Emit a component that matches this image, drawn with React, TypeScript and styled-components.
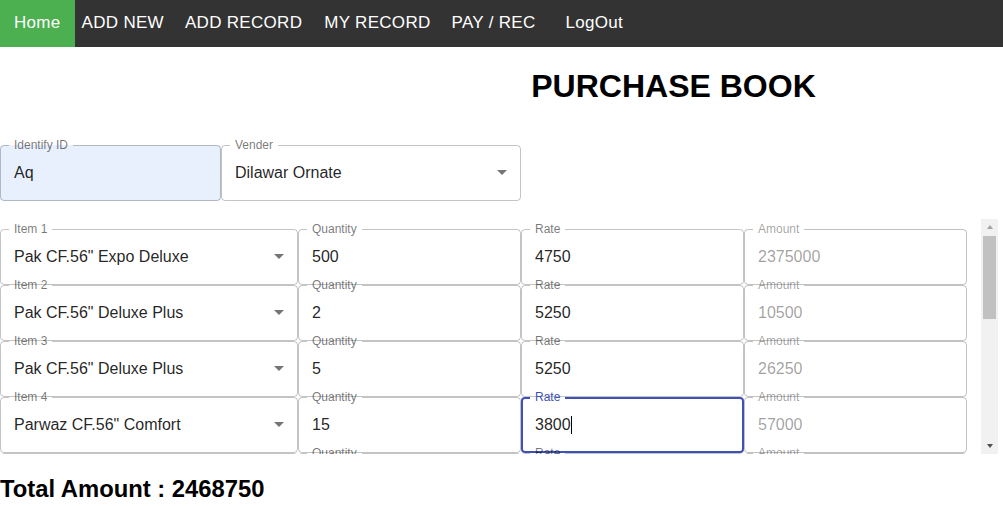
import React from "react";
import styled, { createGlobalStyle } from "styled-components";

const GlobalStyle = createGlobalStyle`
  html, body { margin: 0; padding: 0; background: #fff; }
  body { font-family: "Liberation Sans", Arial, Helvetica, sans-serif; }
  * { box-sizing: border-box; }
`;

const Nav = styled.nav`
  display: flex;
  height: 47px;
  background: #333;
`;

const NavLink = styled.a<{ $active?: boolean; $ml?: number }>`
  display: block;
  height: 47px;
  padding: 13px ${(p) => (p.$active ? 14 : 0)}px 0;
  margin-left: ${(p) => p.$ml ?? 0}px;
  background: ${(p) => (p.$active ? "#4CAF50" : "transparent")};
  color: #fff;
  font-size: 17px;
  line-height: 20px;
  letter-spacing: 0.3px;
  text-decoration: none;
  white-space: nowrap;
`;

const Header = styled.header`
  padding: 20px 0 0 344px;
`;

const Title = styled.h1`
  margin: 0;
  font-size: 32px;
  line-height: 38px;
  font-weight: 700;
  text-align: center;
  color: #000;
`;

const TopRow = styled.div`
  display: flex;
  margin-top: 40px;
`;

const Field = styled.div<{ $w: number; $bg?: string }>`
  position: relative;
  flex: 0 0 ${(p) => p.$w}px;
  width: ${(p) => p.$w}px;
  height: 56px;
  border-radius: 4px;
  background: ${(p) => p.$bg ?? "transparent"};
`;

const Outline = styled.fieldset<{ $focused?: boolean; $disabled?: boolean }>`
  position: absolute;
  top: -5px;
  left: 0;
  right: 0;
  bottom: 0;
  margin: 0;
  min-width: 0;
  padding: 0 ${(p) => (p.$focused ? 7 : 8)}px;
  border: ${(p) => (p.$focused ? 2 : 1)}px solid
    ${(p) => (p.$focused ? "#3f51b5" : p.$disabled ? "rgba(0,0,0,0.24)" : "rgba(0,0,0,0.23)")};
  border-radius: 4px;
  pointer-events: none;
  text-align: left;
`;

const Legend = styled.legend<{ $open: boolean }>`
  display: block;
  width: auto;
  height: 11px;
  padding: 0;
  font-size: 12px;
  line-height: 11px;
  visibility: hidden;
  white-space: nowrap;
  max-width: ${(p) => (p.$open ? "1000px" : "0.01px")};
  & > span {
    display: inline-block;
    padding: 0 5px;
  }
`;

const Label = styled.label<{ $shrink: boolean; $color: string }>`
  position: absolute;
  left: 0;
  top: 0;
  font-size: 16px;
  line-height: 1;
  color: ${(p) => p.$color};
  transform-origin: top left;
  transform: ${(p) => (p.$shrink ? "translate(14px, -6px) scale(0.75)" : "translate(14px, 20px) scale(1)")};
  white-space: nowrap;
  pointer-events: none;
`;

const Value = styled.div<{ $color: string; $select?: boolean }>`
  height: 56px;
  padding: 17.5px ${(p) => (p.$select ? 32 : 14)}px 19.5px 14px;
  font-size: 16px;
  line-height: 19px;
  color: ${(p) => p.$color};
  white-space: nowrap;
  overflow: hidden;
  text-overflow: ellipsis;
`;

const Caret = styled.span`
  display: inline-block;
  width: 1px;
  height: 18px;
  margin-left: 0.5px;
  vertical-align: -4px;
  background: #000;
`;

const Arrow = styled.svg`
  position: absolute;
  right: 7px;
  top: calc(50% - 13px);
  width: 24px;
  height: 24px;
  fill: rgba(0, 0, 0, 0.54);
  pointer-events: none;
`;

const ScrollFrame = styled.div`
  display: flex;
  margin-top: 18px;
  width: 998px;
  height: 235px;
`;

const ScrollArea = styled.div`
  flex: 1 1 auto;
  min-width: 0;
  padding-top: 10px;
  overflow-y: auto;
  overflow-x: hidden;
  scrollbar-width: none;
  &::-webkit-scrollbar {
    display: none;
  }
`;

const ScrollBar = styled.div`
  flex: 0 0 17px;
  display: flex;
  flex-direction: column;
  background: #f1f1f1;
`;

const ScrollButton = styled.div<{ $dir: "up" | "down" }>`
  flex: 0 0 17px;
  display: flex;
  align-items: center;
  justify-content: center;
  &::before {
    content: "";
    display: block;
    width: 0;
    height: 0;
    border-left: 3.5px solid transparent;
    border-right: 3.5px solid transparent;
    ${(p) =>
      p.$dir === "up"
        ? "border-bottom: 4px solid #a3a3a3; margin-top: -1px;"
        : "border-top: 4px solid #505050; margin-top: 1px;"}
  }
`;

const ScrollTrack = styled.div`
  flex: 1 1 auto;
  padding: 0 2px;
`;

const Thumb = styled.div`
  background: #c1c1c1;
`;

const Row = styled.div`
  display: flex;
  height: 56px;
`;

const Total = styled.h2`
  margin: 21px 0 0;
  font-size: 23.8px;
  line-height: 27px;
  font-weight: 700;
  color: #000;
`;

type FieldProps = {
  label: string;
  value: string;
  width: number;
  select?: boolean;
  disabled?: boolean;
  focused?: boolean;
  shrink?: boolean;
  bg?: string;
};

const TextField: React.FC<FieldProps> = ({ label, value, width, select, disabled, focused, shrink = true, bg }) => {
  const labelColor = focused ? "#3f51b5" : disabled ? "rgba(0,0,0,0.38)" : "rgba(0,0,0,0.54)";
  const valueColor = disabled ? "rgba(0,0,0,0.38)" : "rgba(0,0,0,0.87)";
  return (
    <Field $w={width} $bg={bg}>
      <Label $shrink={shrink} $color={labelColor}>
        {label}
      </Label>
      <Value $color={valueColor} $select={select}>
        {value}
        {focused && <Caret />}
      </Value>
      {select && (
        <Arrow viewBox="0 0 24 24" aria-hidden="true">
          <path d="M7 10l5 5 5-5z" />
        </Arrow>
      )}
      <Outline $focused={focused} $disabled={disabled} aria-hidden="true">
        <Legend $open={shrink}>
          <span>{label}</span>
        </Legend>
      </Outline>
    </Field>
  );
};

type Line = { item: string; qty: string; rate: string; amount: string; focusRate?: boolean };

const lines: Line[] = [
  { item: 'Pak CF.56" Expo Deluxe', qty: "500", rate: "4750", amount: "2375000" },
  { item: 'Pak CF.56" Deluxe Plus', qty: "2", rate: "5250", amount: "10500" },
  { item: 'Pak CF.56" Deluxe Plus', qty: "5", rate: "5250", amount: "26250" },
  { item: 'Parwaz CF.56" Comfort', qty: "15", rate: "3800", amount: "57000", focusRate: true },
  { item: "", qty: "", rate: "", amount: "" },
  { item: "", qty: "", rate: "", amount: "" },
  { item: "", qty: "", rate: "", amount: "" },
  { item: "", qty: "", rate: "", amount: "" },
  { item: "", qty: "", rate: "", amount: "" },
  { item: "", qty: "", rate: "", amount: "" },
];

const navItems: { label: string; ml: number; active?: boolean }[] = [
  { label: "Home", ml: 0, active: true },
  { label: "ADD NEW", ml: 7 },
  { label: "ADD RECORD", ml: 21 },
  { label: "MY RECORD", ml: 22 },
  { label: "PAY / REC", ml: 21 },
  { label: "LogOut", ml: 30 },
];

const VIEW_H = 235;
const CONTENT_H = 10 + lines.length * 56;
const TRACK_H = VIEW_H - 34;

export default function App() {
  const total = lines.reduce((s, l) => s + (Number(l.amount) || 0), 0);
  const thumbH = Math.round((TRACK_H * VIEW_H) / CONTENT_H);
  return (
    <>
      <GlobalStyle />
      <Nav>
        {navItems.map((n) => (
          <NavLink key={n.label} href="#" $active={n.active} $ml={n.ml}>
            {n.label}
          </NavLink>
        ))}
      </Nav>
      <Header>
        <Title>PURCHASE BOOK</Title>
      </Header>
      <TopRow>
        <TextField label="Identify ID" value="Aq" width={221} bg="#e8f0fe" />
        <TextField label="Vender" value="Dilawar Ornate" width={300} select />
      </TopRow>
      <ScrollFrame>
        <ScrollArea>
          {lines.map((l, i) => (
            <Row key={i}>
              <TextField label={`Item ${i + 1}`} value={l.item} width={298} select shrink={l.item !== ""} />
              <TextField label="Quantity" value={l.qty} width={223} />
              <TextField label="Rate" value={l.rate} width={223} focused={l.focusRate} />
              <TextField label="Amount" value={l.amount} width={223} disabled />
            </Row>
          ))}
        </ScrollArea>
        <ScrollBar aria-hidden="true">
          <ScrollButton $dir="up" />
          <ScrollTrack>
            <Thumb style={{ height: thumbH }} />
          </ScrollTrack>
          <ScrollButton $dir="down" />
        </ScrollBar>
      </ScrollFrame>
      <Total>Total Amount : {total}</Total>
    </>
  );
}
